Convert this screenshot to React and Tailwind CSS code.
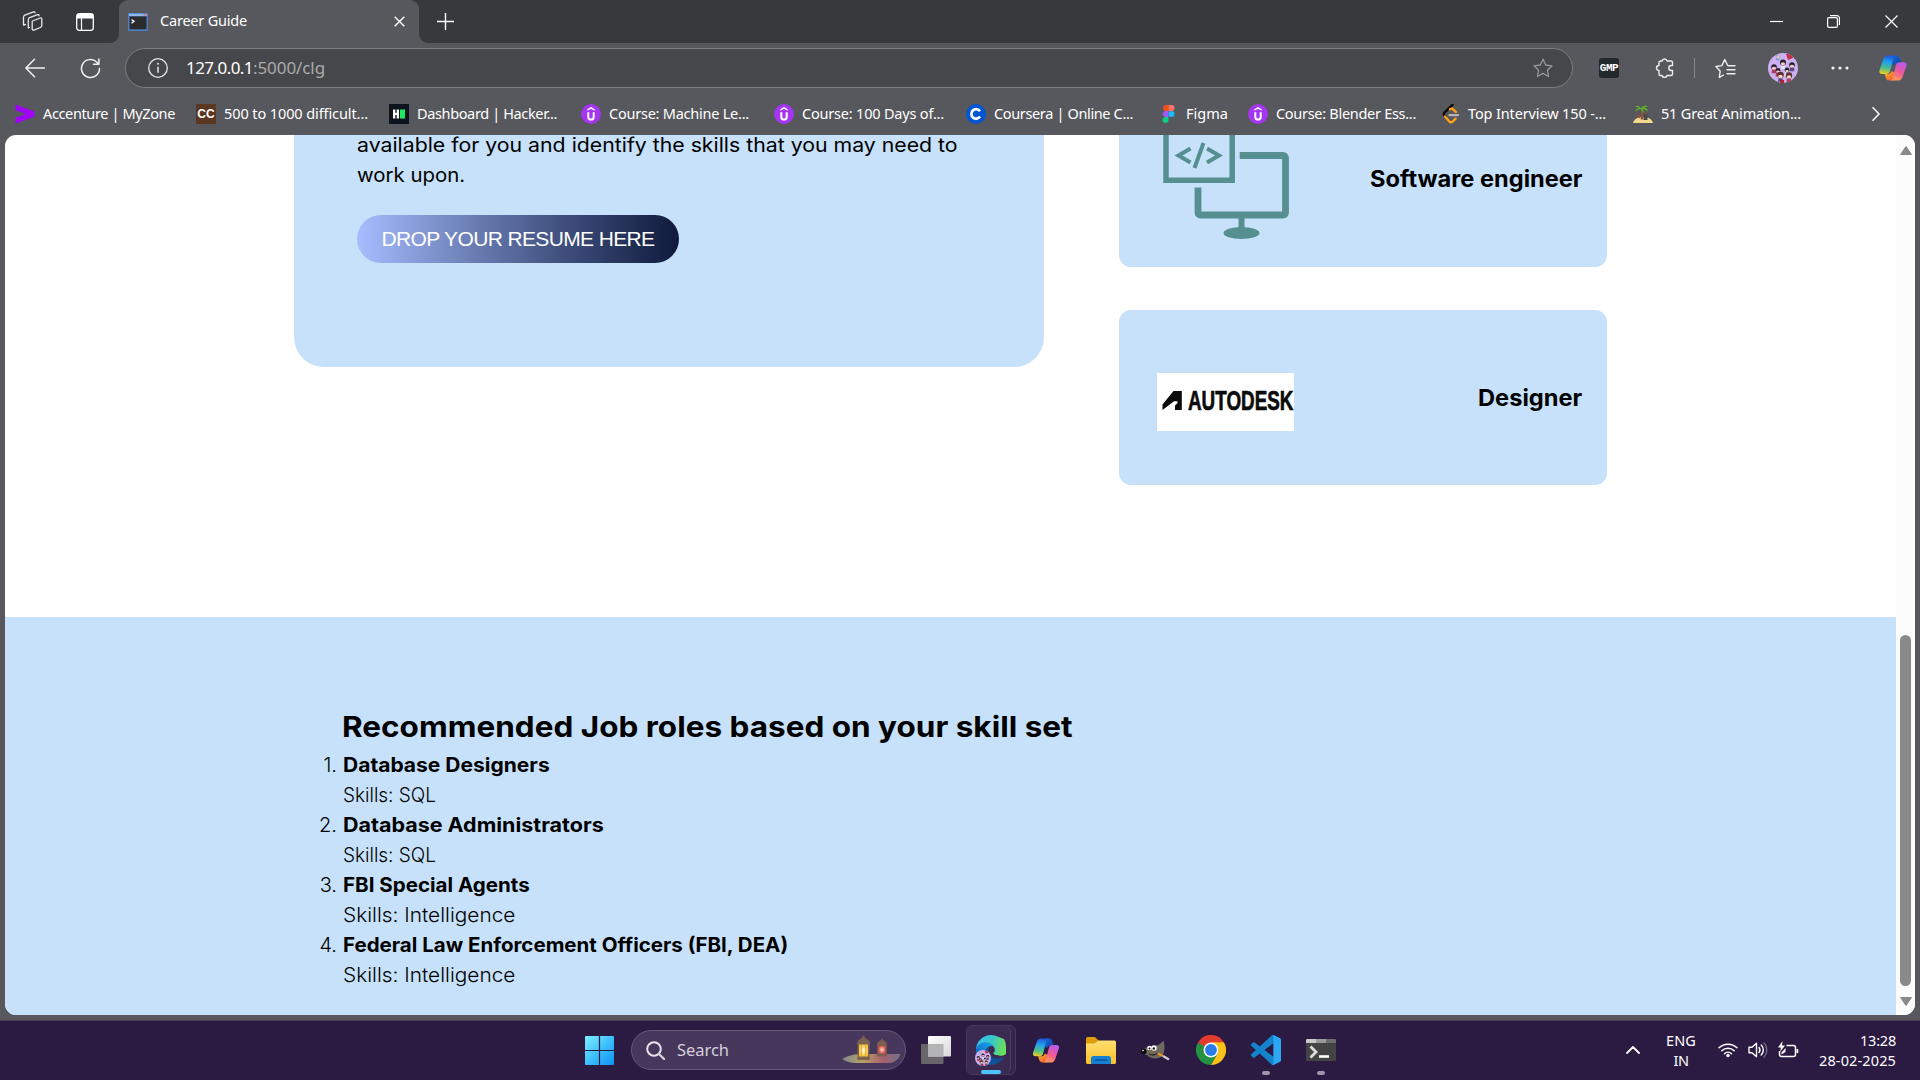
import React, { useLayoutEffect, useRef, useState } from "react";

const UI = "font-['Noto_Sans',sans-serif]";
const PAGE = "font-['Inter',sans-serif]";

/* Inline text whose tracking is computed so that it spans `w` pixels. */
function Fit({ w, className = "", children }) {
  const ref = useRef(null);
  const [spacing, setSpacing] = useState(0);
  useLayoutEffect(() => {
    const el = ref.current;
    const n = el.textContent.length;
    const natural = el.getBoundingClientRect().width - spacing * n;
    setSpacing((w - natural) / n);
  }, [w]);
  return (
    <span ref={ref} className={`inline-block whitespace-pre ${className}`} style={{ letterSpacing: `${spacing}px` }}>
      {children}
    </span>
  );
}

/* One line of text with its glyphs widened so that it spans `w` pixels. */
function Wide({ w, className = "", children }) {
  const ref = useRef(null);
  const [scale, setScale] = useState(1);
  useLayoutEffect(() => {
    setScale(w / ref.current.offsetWidth);
  }, [w]);
  return (
    <span className={`block ${className}`} style={{ width: w }}>
      <span ref={ref} className="inline-block origin-left align-top whitespace-pre" style={{ transform: `scaleX(${scale})` }}>
        {children}
      </span>
    </span>
  );
}

function Svg({ w, h = w, vb, className = "", children }) {
  return (
    <svg width={w} height={h} viewBox={vb || `0 0 ${w} ${h}`} fill="none" className={`shrink-0 ${className}`}>
      {children}
    </svg>
  );
}

/* ---------- small logos ---------- */
const Udemy = () => (
  <Svg w={20}>
    <circle cx="10" cy="10" r="10" fill="#a435f0" />
    <path d="M6.3 6.7V5.2L10 3l3.7 2.2v1.5L10 4.7z" fill="#fff" />
    <path d="M7.3 8.3v4.6c0 1.7 1 2.6 2.7 2.6s2.7-.9 2.7-2.6V8.3" stroke="#fff" strokeWidth="2" />
  </Svg>
);
const Accenture = () => (
  <Svg w={20}>
    <path d="M.5.5 19.5 7.5v5L.5 19.5v-5.7L11 10 .5 6.2z" fill="#a100ff" />
  </Svg>
);
const CodeChef = () => (
  <span className="flex h-5 w-5 shrink-0 items-center justify-center bg-[#5b3620] font-['Liberation_Sans',sans-serif] text-[12px] leading-none font-bold text-white">CC</span>
);
const Hacker = () => (
  <Svg w={20}>
    <path d="M0 0h20v20H0z" fill="#0e141e" />
    <path d="M4 5.5h2.3v3.3h1.4V5.5H10v9H7.700v-3.400H6.300v3.400H4z" fill="#fff" />
    <path d="M11 5.500h5v9h-5z" fill="#1eea5f" />
  </Svg>
);
const Coursera = () => (
  <Svg w={20}>
    <circle cx="10" cy="10" r="10" fill="#0056d2" />
    <path d="M14 7.300A4.700 4.700 0 1 0 14 12.500" stroke="#fff" strokeWidth="2.700" />
  </Svg>
);
const Figma = () => (
  <Svg w={20}>
    <path d="M10.500 1H8a3 3 0 0 0 0 6h2.500z" fill="#f24e1e" />
    <path d="M10.500 1H13.500a3 3 0 0 1 0 6h-3z" fill="#ff7262" />
    <path d="M10.500 7H8a3 3 0 0 0 0 6h2.500z" fill="#a259ff" />
    <circle cx="13.500" cy="10" r="3" fill="#1abcfe" />
    <path d="M10.500 13H8a3 3 0 1 0 2.500 3z" fill="#0acf83" />
  </Svg>
);
const Leet = () => (
  <Svg w={20}>
    <path d="M12.500.800 4.500 8.600a2.300 2.300 0 0 0 0 3L6 13.200" stroke="#070706" strokeWidth="2.400" strokeLinecap="round" />
    <path d="M10 5.200l2.200-.6 3.600 3.300M5 12.500l4.300 5c1 1 2.300 1 3.300 0l3-2.800" stroke="#ffa116" strokeWidth="2.400" strokeLinecap="round" />
    <path d="M9.500 11.200H18" stroke="#b3b3b3" strokeWidth="2.200" strokeLinecap="round" />
  </Svg>
);
const Palm = () => (
  <Svg w={20}>
    <path d="M0 19c1-4 5-6 10-6s9 2 10 6z" fill="#f2d98c" />
    <path d="M7.500 4.500c1 3 1 7 0 11h2.500c1-4 .5-8-1-11z" fill="#8a5a35" />
    <path d="M8 4.500C6 1 3.500 1 2 3c2-.3 3 0 4 1-2 0-3.500 1.500-3.300 4C4 6 6 5.300 8 5c0 1.500 1.500 3 3 3.500-.3-1.500-.8-2.500-1.500-3.300C12 5 14 6 14.500 8 15.500 5 13 3.700 11 4c1-1.200 2.500-1.500 4-1-1.500-2.500-5-2-7 1.500z" fill="#5fb02c" />
    <path d="M10.500 9h4v7h-4z" fill="#4b4a4e" />
    <path d="M12 9.500h1.500M5 11l2 3" stroke="#b5423c" strokeWidth="1.500" />
  </Svg>
);
function Copilot({ w, h, id }) {
  return (
    <Svg w={w} h={h} vb="0 0 28 26">
      <defs>
        <linearGradient id={`${id}a`} x1="8" y1="0" x2="5" y2="19" gradientUnits="userSpaceOnUse">
          <stop stopColor="#2350d8" /><stop offset=".35" stopColor="#1f9fee" /><stop offset=".7" stopColor="#4fc08a" /><stop offset="1" stopColor="#f2cf1d" />
        </linearGradient>
        <linearGradient id={`${id}b`} x1="23" y1="7" x2="15" y2="26" gradientUnits="userSpaceOnUse">
          <stop stopColor="#b35cf0" /><stop offset=".5" stopColor="#f0589a" /><stop offset="1" stopColor="#ffa24d" />
        </linearGradient>
        <linearGradient id={`${id}c`} x1="12" y1="0" x2="21" y2="8" gradientUnits="userSpaceOnUse">
          <stop stopColor="#1c6fe6" /><stop offset="1" stopColor="#0a46a8" />
        </linearGradient>
        <linearGradient id={`${id}d`} x1="8" y1="18" x2="14" y2="26" gradientUnits="userSpaceOnUse">
          <stop stopColor="#f5a623" /><stop offset="1" stopColor="#f0533f" />
        </linearGradient>
      </defs>
      <path d="M14 .5h3.500c1.600 0 2.500 1 3 2.600l1.500 4.600h-3c-2 0-3.200.8-3.900 3L12 8z" fill={`url(#${id}c)`} />
      <path d="M13.500 25.500H10c-1.600 0-2.600-1-3-2.600L5.700 19H9c2 0 3-1 3.600-3l3.400 2z" fill={`url(#${id}d)`} />
      <path d="M15.800.5H8.500C6 .5 4.800 2.600 3.900 5.500L.6 15c-.8 2.500.3 4 2.600 4h4.300c1.900 0 2.900-1.200 3.500-3L14 4.500C14.500 2.500 15 1.200 16.200.600z" fill={`url(#${id}a)`} />
      <path d="M12.200 25.500h7.300c2.500 0 3.700-2.100 4.600-5L27.400 11c.8-2.500-.3-3.700-2.600-3.700h-4.300c-1.900 0-2.900 1.200-3.500 3L14 21.500c-.5 2-1 3.300-2 4z" fill={`url(#${id}b)`} />
    </Svg>
  );
}
const faces = [[6, 14, 2.800], [15, 9.500, 3], [24, 12, 2.800], [10, 17.500, 2.400], [19, 17, 2.400], [12.500, 22, 3.300], [21, 22.500, 3.200]];
function Avatar({ size }) {
  return (
    <svg width={size} height={size} viewBox="0 0 30 30" className="shrink-0 rounded-full">
      <rect width="30" height="30" fill="#ccb0f0" />
      <path d="M8 2l4 1-1 5-3-1z" fill="#7a9fd0" />
      <circle cx="10" cy="4" r="1.500" fill="#f4c9b8" />
      <path d="M18 1h6l1 4-5 2z" fill="#c8304a" />
      {faces.map(([x, y, r], i) => (
        <g key={i}>
          <path d={`M${x - 2} ${y + r}h4l.5 3.500h-5z`} fill={i % 3 === 1 ? "#dfe4f4" : i % 3 ? "#5a4c7a" : "#b23a5a"} />
          <circle cx={x} cy={y} r={r} fill={i > 4 ? "#5c3030" : "#2b1f38"} />
          <ellipse cx={x} cy={y + r * 0.450} rx={r * 0.700} ry={r * 0.500} fill="#f6d0bd" />
        </g>
      ))}
      <path d="M12 27h4v3h-4z" fill="#b01f38" />
    </svg>
  );
}

/* ---------- browser chrome ---------- */
function TabStrip() {
  return (
    <div className="flex h-[43px] shrink-0 items-center bg-[#38393c] text-white">
      <div className="h-full w-[119px] bg-[#57585d]">
        <div className="flex h-full items-center rounded-br-[9px] bg-[#38393c] pl-[22px]">
          <Svg w={21} className="mr-[33px]">
            <g stroke="#e8e8e8" strokeWidth="1.300" strokeLinejoin="round" strokeLinecap="round">
              <path d="M10.500 10l7.800-3a1 1 0 0 1 1.500 1v6.500a2.300 2.300 0 0 1-1.400 2L12 19.200a1.300 1.300 0 0 1-1.800-1.200v-7.500z" />
              <path d="M7.500 16.500 6.300 17V8.700a2.300 2.300 0 0 1 1.400-2L15.500 3.700c.8-.3 1.500 0 1.500.8v.3" />
              <path d="M3.500 13.500 1.500 14V6.200a2.300 2.300 0 0 1 1.400-2L11.500.900c.8-.2 1.500 0 1.500.800" />
            </g>
          </Svg>
          <Svg w={18}>
            <rect x=".7" y=".7" width="16.600" height="16.600" rx="2.500" stroke="#fff" strokeWidth="1.300" />
            <path d="M1 1h16v4.500H1z" fill="#fff" />
            <path d="M5.500 5v12" stroke="#fff" strokeWidth="1.200" />
          </Svg>
        </div>
      </div>
      <div className="flex h-full w-[300px] items-center rounded-t-[9px] bg-[#57585d] pl-[9px]">
        <Svg w={20} h={18}>
          <rect width="20" height="18" rx="1" fill="#4c7fc4" />
          <path d="M1.500 3.500h17v12.800h-17z" fill="#2b2b2b" />
          <path d="M1 .8h18V3H1z" fill="#8fb9ec" />
          <path d="M15.500 1h3v1.500h-3z" fill="#e07060" />
          <path d="M3.500 6.500l2.500 1.800-2.500 1.800" stroke="#fff" strokeWidth="1.300" />
        </Svg>
        <Fit w={87} className={`${UI} -mt-[3px] ml-[12px] text-[14.500px] leading-5`}>Career Guide</Fit>
        <Svg w={11} className="ml-[147px]">
          <path d="M.7.7l9.600 9.600M10.300.7.7 10.300" stroke="#fff" strokeWidth="1.400" />
        </Svg>
      </div>
      <div className="h-full w-[18px] bg-[#57585d]">
        <div className="h-full rounded-bl-[9px] bg-[#38393c]" />
      </div>
      <Svg w={17}>
        <path d="M8.500 0v17M0 8.500h17" stroke="#fff" strokeWidth="1.400" />
      </Svg>
      <div className="ml-auto flex items-center pr-[22px]">
        <Svg w={13}><path d="M0 6.500h13" stroke="#fff" strokeWidth="1.200" /></Svg>
        <Svg w={13} className="ml-[44px]">
          <rect x=".6" y="2.600" width="9.800" height="9.800" rx="1.500" stroke="#fff" strokeWidth="1.200" />
          <path d="M3 .6h7a2.400 2.400 0 0 1 2.400 2.400v7" stroke="#fff" strokeWidth="1.200" />
        </Svg>
        <Svg w={13} className="ml-[45px]"><path d="M.5.5l12 12M12.500.5l-12 12" stroke="#fff" strokeWidth="1.200" /></Svg>
      </div>
    </div>
  );
}

function Toolbar() {
  return (
    <div className="flex h-[50px] shrink-0 items-center bg-[#57585d] pl-[25px]">
      <Svg w={20}><path d="M19.500 10H1M9.500 1.300.9 10l8.600 8.700" stroke="#f2f2f2" strokeWidth="1.500" strokeLinejoin="round" strokeLinecap="round" /></Svg>
      <Svg w={21} className="ml-[35px]">
        <path d="M19.500 10.500a9 9 0 1 1-2.800-6.500l2 2M18.900.900V6.300h-5.400" stroke="#f2f2f2" strokeWidth="1.500" strokeLinejoin="round" strokeLinecap="round" />
      </Svg>
      <div className={`ml-6 flex h-10 w-[1448px] items-center rounded-full border border-[#7d7e82] bg-[#46474a] pl-[22px] ${UI}`}>
        <Svg w={20}>
          <circle cx="10" cy="10" r="9.300" stroke="#e6e6e6" strokeWidth="1.300" />
          <path d="M10 8.800v6" stroke="#e6e6e6" strokeWidth="1.500" /><circle cx="10" cy="5.800" r="1" fill="#e6e6e6" />
        </Svg>
        <Fit w={67} className="ml-[18px] text-[17px] leading-6 text-white">127.0.0.1</Fit>
        <Fit w={72} className="text-[17px] leading-6 text-[#a9aaac]">:5000/clg</Fit>
        <Svg w={20} className="mr-[19px] ml-auto">
          <path d="M10 1.200l2.700 5.800 6.300.8-4.600 4.400 1.200 6.300-5.600-3.100-5.600 3.100 1.200-6.300L1 7.800l6.300-.8z" stroke="#96979a" strokeWidth="1.300" strokeLinejoin="round" />
        </Svg>
      </div>
      <span className="ml-[26px] flex h-5 w-5 items-center justify-center rounded-[3px] bg-[#22282b] pt-px font-['Liberation_Mono',monospace] text-[11px] leading-none font-bold tracking-[-0.5px] text-white">GMP</span>
      <Svg w={20} className="ml-[36px]">
        <path d="M5.500 3h1.600a2.500 2.500 0 0 1 4.900 0H16a1.500 1.500 0 0 1 1.500 1.500v3h-1.200a2.500 2.500 0 0 0 0 5h1.200v3.500a1.500 1.500 0 0 1-1.500 1.500h-4a2.500 2.500 0 0 1-4.900 0H5.500A1.500 1.500 0 0 1 4 16v-3.500a2.500 2.500 0 0 1 0-5V4.500A1.500 1.500 0 0 1 5.500 3z" stroke="#ededed" strokeWidth="1.400" strokeLinejoin="round" />
      </Svg>
      <div className="ml-[19px] h-5 w-px bg-[#85868a]" />
      <Svg w={21} className="ml-[20px]">
        <path d="M8.500 17l-4.200 2.500.9-6.300L.900 8.500l6-.900L9.700 1.500l2.800 5.500" stroke="#ededed" strokeWidth="1.400" strokeLinejoin="round" strokeLinecap="round" />
        <path d="M13 7.700h7M12 11.700h8M12 15.700h8" stroke="#ededed" strokeWidth="1.400" strokeLinecap="round" />
      </Svg>
      <span className="ml-8"><Avatar size={30} /></span>
      <Svg w={18} h={4} className="ml-[33px]"><circle cx="2" cy="2" r="1.600" fill="#f2f2f2" /><circle cx="9" cy="2" r="1.600" fill="#f2f2f2" /><circle cx="16" cy="2" r="1.600" fill="#f2f2f2" /></Svg>
      <span className="ml-[30px]"><Copilot w={28} h={26} id="t" /></span>
    </div>
  );
}

function Bookmark({ w, tw, icon, children }) {
  return (
    <div className={`flex shrink-0 items-center gap-2 ${w}`}>
      {icon}
      <Fit w={tw} className="-mt-[2px] text-[14.500px] leading-5">{children}</Fit>
    </div>
  );
}

function Bookmarks() {
  return (
    <div className={`flex h-[42px] shrink-0 items-center bg-[#57585d] pl-[15px] text-white ${UI}`}>
      <Bookmark w="w-[181px]" tw={132} icon={<Accenture />}>Accenture | MyZone</Bookmark>
      <Bookmark w="w-[193px]" tw={144} icon={<CodeChef />}>500 to 1000 difficult...</Bookmark>
      <Bookmark w="w-[192px]" tw={140} icon={<Hacker />}>Dashboard | Hacker...</Bookmark>
      <Bookmark w="w-[193px]" tw={140} icon={<Udemy />}>Course: Machine Le...</Bookmark>
      <Bookmark w="w-[192px]" tw={142} icon={<Udemy />}>Course: 100 Days of...</Bookmark>
      <Bookmark w="w-[192px]" tw={139} icon={<Coursera />}>Coursera | Online C...</Bookmark>
      <Bookmark w="w-[90px]" tw={42} icon={<Figma />}>Figma</Bookmark>
      <Bookmark w="w-[192px]" tw={140} icon={<Udemy />}>Course: Blender Ess...</Bookmark>
      <Bookmark w="w-[193px]" tw={138} icon={<Leet />}>Top Interview 150 -...</Bookmark>
      <Bookmark w="w-[193px]" tw={140} icon={<Palm />}>51 Great Animation...</Bookmark>
      <Svg w={8} h={14} className="ml-[46px]"><path d="M1 .7 7 7l-6 6.300" stroke="#fff" strokeWidth="1.500" strokeLinejoin="round" strokeLinecap="round" /></Svg>
    </div>
  );
}

/* ---------- page ---------- */
function RoleCard({ picture, w, nudge = "", children }) {
  return (
    <div className="flex h-[175px] shrink-0 items-center justify-between rounded-[12px] bg-[#c6e1f9] pr-[25px] pl-[38px]">
      {picture}
      <Wide w={w} className={`text-[22.500px] leading-8 font-bold ${nudge}`}>{children}</Wide>
    </div>
  );
}

const DevPicture = (
  <svg width="137" height="137" viewBox="1157 111 137 137" fill="none">
    <g stroke="#568f8f">
      <path d="M1166 111v69.200h66.200V111" strokeWidth="5.500" />
      <path d="M1190.500 148.500l-12 7 12 7M1207 148.500l12 7-12 7" strokeWidth="4" />
      <path d="M1203.500 143l-9 25" strokeWidth="4" />
      <path d="M1239.700 155.500h43.300a2.500 2.500 0 0 1 2.500 2.500v54.500a2.500 2.500 0 0 1-2.500 2.500h-82.500a2.500 2.500 0 0 1-2.500-2.500V187.500" strokeWidth="6.800" />
      <path d="M1241.500 218v12" strokeWidth="6" />
    </g>
    <ellipse cx="1241.500" cy="233" rx="18" ry="6" fill="#568f8f" />
  </svg>
);

const AutodeskPicture = (
  <svg width="137" height="58" viewBox="0 0 137 58" className="mt-[9px] bg-white">
    <path d="M5.500 37v-5.500L16.500 18h8.300v19h-6.800v-4.500l2.500-2.500v-1.800H17z" fill="#0b0b0b" />
    <text x="31" y="37" fontSize="27.500" fontWeight="700" fontFamily="Liberation Sans, sans-serif" textLength="105.500" lengthAdjust="spacingAndGlyphs" fill="#0b0b0b" stroke="#0b0b0b" strokeWidth=".7">AUTODESK</text>
  </svg>
);

const jobs = [
  ["Database Designers", 207, "Skills: SQL", 93],
  ["Database Administrators", 261, "Skills: SQL", 93],
  ["FBI Special Agents", 187, "Skills: Intelligence", 172],
  ["Federal Law Enforcement Officers (FBI, DEA)", 445, "Skills: Intelligence", 172],
];

function Page() {
  return (
    <div className={`flex h-[880px] min-w-0 flex-1 flex-col text-black ${PAGE}`}>
      <div className="flex h-[482px] shrink-0 items-start overflow-hidden pl-[289px]">
        <div className="h-[232px] w-[750px] rounded-b-[30px] bg-[#c6e1f9] pl-[63px]">
          <p className="-mt-[5px] text-[20px] leading-[30px]">
            <Wide w={601}>available for you and identify the skills that you may need to</Wide>
            <Wide w={108}>work upon.</Wide>
          </p>
          <button className="mt-[25px] flex h-12 w-[322px] items-center justify-center rounded-full bg-linear-to-r from-[#a7bdff] to-[#0f1a3c] font-['Liberation_Sans',sans-serif] text-[21px] text-white">
            <Fit w={273}>DROP YOUR RESUME HERE</Fit>
          </button>
        </div>
        <div className="-mt-[43px] ml-[75px] flex w-[488px] flex-col gap-[43px]">
          <RoleCard picture={DevPicture} w={212} nudge="-mt-[2px]">Software engineer</RoleCard>
          <RoleCard picture={AutodeskPicture} w={104}>Designer</RoleCard>
        </div>
      </div>
      <div className="flex-1 bg-[#c6e1f9] pt-[86px] pl-[337px]">
        <h2 className="text-[29px] leading-[47px] font-bold"><Wide w={731}>Recommended Job roles based on your skill set</Wide></h2>
        <ol>
          {jobs.map(([title, tw, skills, sw], i) => (
            <li key={title} className="-ml-[37px] flex gap-[6px] text-[20px] leading-[30px]">
              <span className="w-8 text-right font-light">{i + 1}.</span>
              <div>
                <Wide w={tw} className="font-bold">{title}</Wide>
                <Wide w={sw} className="font-light">{skills}</Wide>
              </div>
            </li>
          ))}
        </ol>
      </div>
    </div>
  );
}

function Scrollbar() {
  return (
    <div className="flex w-[19px] flex-col items-center bg-[#fcfcfc]">
      <Svg w={12} h={9} className="mt-[11px]"><path d="M6 .5 11.500 8.500H.5z" fill="#8a8a8a" stroke="#8a8a8a" strokeLinejoin="round" /></Svg>
      <div className="mt-[480px] h-[351px] w-[11px] rounded-full bg-[#8a8a8a]" />
      <Svg w={12} h={9} className="mt-[11px]"><path d="M6 8.500 11.500.5H.5z" fill="#8a8a8a" stroke="#8a8a8a" strokeLinejoin="round" /></Svg>
    </div>
  );
}

/* ---------- taskbar ---------- */
const Windows = () => (
  <Svg w={29}>
    <defs><linearGradient id="win" x1="0" y1="0" x2="1" y2="1"><stop stopColor="#7df0ff" /><stop offset=".5" stopColor="#3fc0fb" /><stop offset="1" stopColor="#0c93f5" /></linearGradient></defs>
    <rect width="29" height="29" rx="1" fill="url(#win)" />
    <path d="M14.500 0v29M0 14.500h29" stroke="#2b1a42" strokeWidth="1.200" />
  </Svg>
);
const Lanterns = () => (
  <Svg w={59} h={30}>
    <defs>
      <radialGradient id="lg"><stop stopColor="#fffbe0" /><stop offset="1" stopColor="#f7c12f" /></radialGradient>
      <radialGradient id="lr"><stop stopColor="#ffe3d0" /><stop offset="1" stopColor="#e0504f" /></radialGradient>
      <linearGradient id="lf" x1="0" x2="1"><stop stopColor="#7d8794" /><stop offset=".35" stopColor="#b5a164" /><stop offset=".7" stopColor="#a8606e" /><stop offset="1" stopColor="#6d7488" /></linearGradient>
    </defs>
    <path d="M0 24c5-3 12-5 20-5h38.500c-1 4-4 7-9 9H14C8 28 3 26 0 24z" fill="url(#lf)" />
    <path d="M21.500 0l1.300 2.500 4.700 3.500v3H15.500V6l4.700-3.500zM14.500 8h14l-1 1.500v13L28.500 24l-1.500 1H16l-1.500-1 1-1.500v-13z" fill="#7a6252" />
    <path d="M17 9.500h9v12h-9z" fill="url(#lg)" /><path d="M19.500 9v13M23.500 9v13" stroke="#c9973a" strokeWidth=".6" />
    <path d="M40 3l1 2 3.800 2.800V10h-9.600V7.800L39 5zM34.500 9.500h11l-.700 1v9l.7.700-1 1.300h-9l-1-1.300.7-.7v-9z" fill="#7c5d52" />
    <path d="M36.700 11h6.600v7.500h-6.600z" fill="url(#lr)" />
  </Svg>
);
const TaskView = () => (
  <Svg w={30} h={28}>
    <defs><linearGradient id="tv" x1="0" y1="0" x2="1" y2="1"><stop stopColor="#fff" /><stop offset="1" stopColor="#d8d8d8" /></linearGradient></defs>
    <rect y="8" width="22.500" height="20" rx="1" fill="#68666b" />
    <rect x="7" width="23" height="20.500" rx="1" fill="url(#tv)" />
    <path d="M7 8h15.500v12.500H7z" fill="#b4b3b5" />
  </Svg>
);
const Edge = () => (
  <Svg w={30} vb="0 0 256 256">
    <defs>
      <linearGradient id="e1" x1="63" y1="177" x2="241" y2="177" gradientUnits="userSpaceOnUse"><stop stopColor="#0c59a4" /><stop offset="1" stopColor="#114a8b" /></linearGradient>
      <linearGradient id="e2" x1="157" y1="100" x2="46" y2="230" gradientUnits="userSpaceOnUse"><stop stopColor="#1b9de2" /><stop offset=".5" stopColor="#1383d8" /><stop offset="1" stopColor="#0957b5" /></linearGradient>
      <linearGradient id="e3" x1="10" y1="60" x2="240" y2="120" gradientUnits="userSpaceOnUse"><stop stopColor="#35c1f1" /><stop offset=".5" stopColor="#36c6c8" /><stop offset="1" stopColor="#6be05a" /></linearGradient>
    </defs>
    <path d="M231 190c-3 2-7 3-10 5-11 4-22 6-34 6-45 0-84-31-84-71 0-11 6-21 16-26-41 2-51 44-51 69 0 70 65 78 79 78 7 0 18-2 25-4l1-1c25-8 47-25 62-49 1-4-1-8-4-7z" fill="url(#e1)" />
    <path d="M106 241c-9-5-16-12-22-20-27-37-19-89 18-116 4-3 8-6 12-7 3-2 9-5 17-4 11 0 21 5 28 14 5 6 7 13 7 21 0-1 27-88-88-88C30 41 0 87 0 128c0 20 4 39 12 56 28 59 95 87 156 67-21 6-43 3-62-10z" fill="url(#e2)" />
    <path d="M152 149c-1 1-4 3-4 7 0 3 2 7 6 9 20 14 56 12 57 12 14 0 28-4 40-11 24-15 5-35 5-64 0-34-12-57-17-67C208 26 170 0 128 0 57 0 1 57 0 128c1-37 37-67 80-67 3 0 24 0 42 10 17 9 25 20 32 31 6 11 7 25 7 30s-3 13-9 17z" fill="url(#e3)" />
  </Svg>
);
const Folder = () => (
  <Svg w={30} h={27}>
    <defs><linearGradient id="fo" x1="0" y1="0" x2="0" y2="1"><stop stopColor="#ffdf70" /><stop offset="1" stopColor="#fbc02b" /></linearGradient></defs>
    <path d="M0 1.500A1.500 1.500 0 0 1 1.500 0H9l3.500 3.500V10H0z" fill="#dd9c0c" />
    <path d="M12.500 3.500H28.500A1.500 1.500 0 0 1 30 5v20.500a1.500 1.500 0 0 1-1.500 1.500h-27A1.500 1.500 0 0 1 0 25.500V6.500h8.500z" fill="url(#fo)" />
    <path d="M5 27v-5.500A2.500 2.500 0 0 1 7.500 19h15a2.500 2.500 0 0 1 2.500 2.500V27z" fill="#1680d2" />
    <path d="M9 23h12" stroke="#0b4f92" strokeWidth="1.400" />
  </Svg>
);
const Gimp = () => (
  <Svg w={29} h={21}>
    <path d="M3 10C5 6 8 7 11 6.500 16 6 20 4 22.500.5c1.500 5 1.500 11-1 15C18 20 9 19 6 15c-2 0-4-2-3-5z" fill="#6f685c" />
    <circle cx="2.800" cy="11.500" r="2.800" fill="#0c0c0c" /><circle cx="2" cy="10.500" r=".8" fill="#fff" />
    <circle cx="8.500" cy="8" r="2.300" fill="#fff" /><circle cx="13" cy="8" r="2.700" fill="#fff" /><circle cx="8.500" cy="8.500" r="1" fill="#111" /><circle cx="12.800" cy="8.500" r="1.200" fill="#111" />
    <path d="M8 14c3 1.500 6 1 8-.5" stroke="#2b2824" strokeWidth="1.300" />
    <path d="M17 13.500l5 2.500" stroke="#e0962b" strokeWidth="2" /><path d="M22 16l6 3.500" stroke="#ccc" strokeWidth="2.200" />
  </Svg>
);
const Chrome = () => (
  <Svg w={30} vb="0 0 48 48">
    <path d="M24 24 3.200 12a24 24 0 0 1 41.600 0z" fill="#e33b2e" />
    <path d="M3.200 12A24 24 0 0 0 24 48l10.400-18L13.600 30z" fill="#229342" />
    <path d="M44.800 12A24 24 0 0 1 24 48l10.400-18c2-4 2-10-1-14l-9.400-4z" fill="#fbc116" />
    <path d="M24 12h20.800L34 24z" fill="#fbc116" />
    <path d="M3.200 12 13.600 30 24 24V12z" fill="#e33b2e" />
    <path d="M3.200 12 13.600 30l3 2L14 18z" fill="#229342" />
    <circle cx="24" cy="24" r="12" fill="#fff" /><circle cx="24" cy="24" r="9.500" fill="#2a7de9" />
  </Svg>
);
const Code = () => (
  <Svg w={30} vb="0 0 100 100">
    <path fillRule="evenodd" d="M96.460 10.800 75.860.880C73.470-.270 70.620.210 68.750 2.080L29.350 38.040 12.190 25.010C10.590 23.800 8.350 23.900 6.870 25.240L1.360 30.250C-.450 31.900-.460 34.750 1.350 36.400L16.250 50 1.350 63.600C-.460 65.250-.450 68.100 1.360 69.750L6.870 74.760C8.350 76.100 10.590 76.200 12.190 74.990L29.350 61.960 68.750 97.920C70.620 99.790 73.470 100.270 75.860 99.120L96.470 89.200C98.630 88.160 100 85.970 100 83.570V16.430C100 14.030 98.630 11.840 96.460 10.800ZM75.020 72.700 45.110 50 75.020 27.300Z" fill="#1384cb" />
    <path d="M75.860.880 96.460 10.800C98.630 11.840 100 14.030 100 16.430V83.570C100 85.970 98.630 88.160 96.470 89.200L75.860 99.120C73.470 100.270 71 99.800 69 98 72 100 75 98 75 94.500V5.500C75 2 72 0 69 2 71 .200 73.470-.270 75.860.880Z" fill="#2aa8f4" />
  </Svg>
);
const Terminal = () => (
  <Svg w={30} h={22}>
    <rect width="30" height="22" rx="1.300" fill="#444" />
    <path d="M0 4V1.300A1.300 1.300 0 0 1 1.300 0H10v4z" fill="#c9c9c9" /><path d="M10 0h10v4H10z" fill="#9a9a9a" /><path d="M20 0h8.700A1.300 1.300 0 0 1 30 1.300V4H20z" fill="#6d6d6d" />
    <path d="M4.500 7.500 10 13l-5.500 5.500" stroke="#dcdcdc" strokeWidth="2.800" /><path d="M13 17.500h10" stroke="#fff" strokeWidth="2.600" />
  </Svg>
);

function TaskItem({ open, children }) {
  return (
    <div className="relative flex h-[50px] w-[55px] shrink-0 items-center justify-center">
      {children}
      {open && <span className="absolute bottom-0 left-[24px] h-1 w-2 rounded-full bg-[#a193ae]" />}
    </div>
  );
}

function Taskbar() {
  return (
    <div className={`flex h-[59px] shrink-0 items-center bg-[#2b1a42] pb-px text-white ${UI}`}>
      <div className="ml-[585px]"><Windows /></div>
      <div className="ml-[17px] flex h-10 w-[275px] items-center rounded-full border border-[#655878] bg-[#48375d] pl-[14px]">
        <Svg w={19}>
          <circle cx="8" cy="8" r="6.800" stroke="#e8e4ec" strokeWidth="2" /><path d="M13 13l5 5" stroke="#d5cfdc" strokeWidth="2.400" strokeLinecap="round" />
        </Svg>
        <Fit w={52} className="ml-[12px] text-[16.500px] leading-6 text-[#d5cfdc]">Search</Fit>
        <span className="ml-auto pr-1"><Lanterns /></span>
      </div>
      <div className="ml-[15px]"><TaskView /></div>
      <div className="relative ml-[15px] h-[50px] w-[50px] rounded-[6px] border border-[#46385d] bg-[#35264d]">
        <div className="flex h-full w-[44px] items-center justify-center rounded-[6px] border-r border-[#4a3c60] bg-[#3b2b53] pl-[5px]"><Edge /></div>
        <span className="absolute top-[24px] left-[8px]"><Avatar size={16} /></span>
        <span className="absolute bottom-0 left-[14px] h-1 w-5 rounded-full bg-[#4cc2ff]" />
      </div>
      <div className="ml-[2px] flex">
        <TaskItem><Copilot w={28} h={25} id="k" /></TaskItem>
        <TaskItem><Folder /></TaskItem>
        <TaskItem><Gimp /></TaskItem>
        <TaskItem><Chrome /></TaskItem>
        <TaskItem open><Code /></TaskItem>
        <TaskItem open><Terminal /></TaskItem>
      </div>
      <Svg w={14} h={8} className="ml-[278px]"><path d="M1 7l6-6 6 6" stroke="#fff" strokeWidth="1.800" strokeLinejoin="round" strokeLinecap="round" /></Svg>
      <div className="-mt-px ml-[24px] flex w-[34px] flex-col items-center text-[14.500px] leading-5">
        <Fit w={30}>ENG</Fit>
        <Fit w={15}>IN</Fit>
      </div>
      <Svg w={20} h={16} className="ml-[20px]">
        <g stroke="#fff" strokeWidth="1.500" strokeLinecap="round"><path d="M1 5.800a13 13 0 0 1 18 0M3.800 8.800a9 9 0 0 1 12.400 0M6.500 11.700a5 5 0 0 1 7 0" /></g>
        <circle cx="10" cy="13.500" r="1.700" fill="#fff" />
      </Svg>
      <Svg w={20} h={18} className="ml-[10px]">
        <path d="M1 6.300h3l4.500-4v13.400l-4.500-4H1z" stroke="#fff" strokeWidth="1.400" strokeLinejoin="round" />
        <path d="M11 6.500a4 4 0 0 1 0 5M13.200 4a7 7 0 0 1 0 10" stroke="#fff" strokeWidth="1.400" strokeLinecap="round" /><path d="M16 2a10 10 0 0 1 0 14" stroke="#76698a" strokeWidth="1.400" strokeLinecap="round" />
      </Svg>
      <Svg w={21} h={18} className="ml-[10px]">
        <path d="M8.500 4.500h7a2 2 0 0 1 2 2v7a2 2 0 0 1-2 2h-12a2 2 0 0 1-2-2V10" stroke="#fff" strokeWidth="1.500" />
        <path d="M18.500 8h1.800v4h-1.800z" fill="#fff" /><path d="M4.500 0 0 6.500h3L2 11l5-6.500H4z" fill="#fff" />
        <path d="M3.500 13.500V11.500L7.500 7v4z" fill="#fff" />
      </Svg>
      <div className="-mt-px ml-auto flex flex-col items-end pr-[24px] text-[14.500px] leading-5">
        <Fit w={36}>13:28</Fit>
        <Fit w={77}>28-02-2025</Fit>
      </div>
    </div>
  );
}

export default function App() {
  return (
    <div className="flex h-[1080px] w-[1920px] flex-col overflow-hidden bg-[#57585d]">
      <TabStrip />
      <Toolbar />
      <Bookmarks />
      <div className="mx-[5px] flex h-[880px] shrink-0 overflow-hidden rounded-[11px] bg-white">
        <Page />
        <Scrollbar />
      </div>
      <div className="h-[6px] shrink-0 border-b border-[#4b3f57]" />
      <Taskbar />
    </div>
  );
}
